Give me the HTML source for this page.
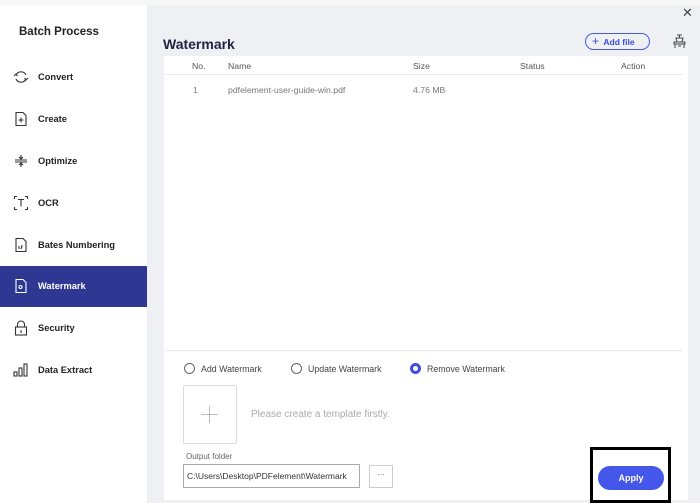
<!DOCTYPE html>
<html><head><style>
*{margin:0;padding:0;box-sizing:border-box}
body{width:700px;height:503px;overflow:hidden;background:#eef0f4;font-family:"Liberation Sans",sans-serif;position:relative}
.abs{position:absolute}
.side{left:0;top:5px;width:147px;height:498px;background:#fff}
.item{position:absolute;left:0;width:147px;height:41px;font-size:9.3px;font-weight:bold;color:#222;}
.item span{position:absolute;left:38px;top:15px}
.ic{position:absolute;left:13px;top:12px;width:16px;height:16px}
.panel{left:164px;top:56px;width:524px;height:444px;background:#fff}
.th{font-size:8.7px;color:#555;top:61px}
.td{font-size:8.7px;color:#777;top:85px}
.radio{width:11px;height:11px;border:1px solid #666;border-radius:50%}
.lbl{font-size:8.8px;color:#444}
</style></head><body>
<div class="abs" style="left:0;top:0;width:700px;height:5px;background:#f7f7f8"></div>
<div class="abs side">
<div class="abs" style="left:19px;top:21px;font-size:11.5px;font-weight:bold;color:#222">Batch Process</div>
</div>
<div class="item" style="top:57px"><svg class="ic" viewBox="0 0 16 16" fill="none" stroke="#333" stroke-width="1.1"><path d="M3 6a5.5 5.5 0 0 1 10 0M13 10a5.5 5.5 0 0 1-10 0"/><path d="M1 7l2-2 1.5 2M15 9l-2 2-1.5-2"/></svg><span>Convert</span></div>
<div class="item" style="top:99px"><svg class="ic" viewBox="0 0 16 16" fill="none" stroke="#333" stroke-width="1.1"><path d="M3 1.5h7l3 3v10H3z"/><path d="M8 6.5v5M5.5 9h5"/></svg><span>Create</span></div>
<div class="item" style="top:141px"><svg class="ic" viewBox="0 0 16 16" fill="none" stroke="#333" stroke-width="1.1"><path d="M2 7h12M2 9h12M8 2v4M8 10v4M6 4l2 2 2-2M6 12l2-2 2 2"/></svg><span>Optimize</span></div>
<div class="item" style="top:183px"><svg class="ic" viewBox="0 0 16 16" fill="none" stroke="#333" stroke-width="1.1"><path d="M1.5 4V1.5H4M12 1.5h2.5V4M1.5 12v2.5H4M12 14.5h2.5V12M5 4.5h6M8 4.5v7"/></svg><span>OCR</span></div>
<div class="item" style="top:225px"><svg class="ic" viewBox="0 0 16 16" fill="none" stroke="#333" stroke-width="1.1"><path d="M3 1.5h7l3 3v10H3z"/><path d="M6 12v-3M8 12l1-3h-1"/></svg><span>Bates Numbering</span></div>
<div class="item" style="top:266px;background:#2e3893;color:#fff"><svg class="ic" viewBox="0 0 16 16" fill="none" stroke="#fff" stroke-width="1.1"><path d="M3 1.5h7l3 3v10H3z"/><circle cx="7.5" cy="9" r="1.5"/></svg><span>Watermark</span></div>
<div class="item" style="top:308px"><svg class="ic" viewBox="0 0 16 16" fill="none" stroke="#333" stroke-width="1.1"><path d="M4.5 7V4.5a3.5 3.5 0 0 1 7 0V7"/><rect x="2.5" y="7" width="11" height="8"/><path d="M8 10v3"/></svg><span>Security</span></div>
<div class="item" style="top:350px"><svg class="ic" viewBox="0 0 16 16" fill="none" stroke="#333" stroke-width="1.1"><rect x="1" y="10" width="3" height="4"/><rect x="6" y="6" width="3" height="8"/><rect x="11" y="2" width="3" height="12"/></svg><span>Data Extract</span></div>

<div class="abs" style="left:163px;top:36px;font-size:14px;font-weight:bold;color:#1f2340">Watermark</div>
<div class="abs" style="left:682px;top:5px;font-size:13px;color:#444">✕</div>
<div class="abs" style="left:585px;top:33px;width:65px;height:17px;border:1.5px solid #4a5ae0;border-radius:9px;color:#3a4bd6;font-size:8.5px;font-weight:bold;line-height:14px;padding-left:6px"><span style="font-weight:normal;font-size:12px">+</span>&nbsp; Add file</div>
<svg class="abs" style="left:672px;top:34px" width="15" height="15" viewBox="0 0 15 15" fill="none" stroke="#444" stroke-width="1"><path d="M5 1h5M7.5 1v3M4 4h7l-1 4H5zM2 8h11v2H2zM3 10v4M12 10v4M6 12h3"/></svg>
<div class="abs panel"></div>
<div class="abs th" style="left:192px">No.</div>
<div class="abs th" style="left:228px">Name</div>
<div class="abs th" style="left:413px">Size</div>
<div class="abs th" style="left:520px">Status</div>
<div class="abs th" style="left:621px">Action</div>
<div class="abs" style="left:165px;top:74px;width:518px;height:1px;background:#e6e7ea"></div>
<div class="abs td" style="left:193px">1</div>
<div class="abs td" style="left:228px">pdfelement-user-guide-win.pdf</div>
<div class="abs td" style="left:413px">4.76 MB</div>
<div class="abs" style="left:166px;top:350px;width:516px;height:1px;background:#e6e7ea"></div>
<div class="abs radio" style="left:184px;top:363px"></div><div class="abs lbl" style="left:201px;top:364px">Add Watermark</div>
<div class="abs radio" style="left:291px;top:363px"></div><div class="abs lbl" style="left:308px;top:364px">Update Watermark</div>
<div class="abs radio" style="left:410px;top:363px;border:3px solid #3e50dc"></div><div class="abs lbl" style="left:427px;top:364px">Remove Watermark</div>
<div class="abs" style="left:183px;top:385px;width:54px;height:59px;border:1px solid #ddd;border-radius:2px"></div>
<div class="abs" style="left:201px;top:414px;width:17px;height:1px;background:#bbb"></div>
<div class="abs" style="left:209px;top:406px;width:1px;height:17px;background:#bbb"></div>
<div class="abs" style="left:251px;top:409px;font-size:10px;color:#aaa">Please create a template firstly.</div>
<div class="abs" style="left:186px;top:452px;font-size:8px;color:#666">Output folder</div>
<div class="abs" style="left:183px;top:464px;width:177px;height:24px;border:1px solid #aaa;font-size:8.5px;color:#333;line-height:22px;padding-left:3px;white-space:nowrap;overflow:hidden">C:\Users\Desktop\PDFelement\Watermark</div>
<div class="abs" style="left:369px;top:465px;width:24px;height:23px;border:1px solid #ccc;font-size:8px;color:#555;text-align:center;line-height:18px">···</div>
<div class="abs" style="left:590px;top:447px;width:81px;height:56px;border:3px solid #000;background:#fff"></div>
<div class="abs" style="left:598px;top:466px;width:66px;height:24px;background:#4457ea;border-radius:12px;color:#fff;font-size:9px;font-weight:bold;text-align:center;line-height:24px">Apply</div>
</body></html>
